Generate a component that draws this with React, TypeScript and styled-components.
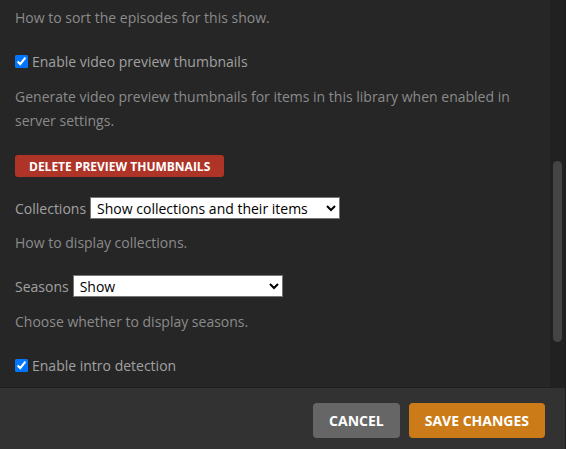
import React from "react";
import styled, { createGlobalStyle } from "styled-components";

const GlobalStyle = createGlobalStyle`
  html, body {
    margin: 0;
    padding: 0;
    background: #1d1d1d;
  }
  body {
    font-family: "Open Sans", "Liberation Sans", sans-serif;
  }
`;

const Modal = styled.div`
  width: 565px;
  height: 449px;
  display: flex;
  flex-direction: column;
  overflow: hidden;
`;

const Body = styled.div`
  flex: 1;
  display: flex;
  min-height: 0;
  background-color: #262626;
`;

const ScrollContent = styled.div`
  flex: 1;
  padding: 6px 15px 0;
  overflow: hidden;
`;

const Track = styled.div`
  width: 15px;
  background-color: #212121;
  display: flex;
  justify-content: center;
`;

const Thumb = styled.div`
  width: 9px;
  height: 181px;
  margin-top: 161px;
  border-radius: 5px;
  background-color: #444;
`;

const Group = styled.div`
  margin-bottom: 20px;
`;

const Row = styled.div`
  display: flex;
  align-items: center;
  height: 22px;
  font-size: 14px;
  color: #a1a1a1;
`;

const Checkbox = styled.input.attrs({ type: "checkbox" })`
  width: 13px;
  height: 13px;
  margin: 0 4px 0 0;
`;

const Label = styled.label`
  margin-right: 4px;
`;

const Select = styled.select<{ $width: number }>`
  width: ${(p) => p.$width}px;
  height: 22px;
  font-family: "Open Sans", "Liberation Sans", sans-serif;
  font-size: 14px;
  color: #000;
  background-color: #fff;
  border: 1px solid #767676;
  border-radius: 0;
  padding: 0 2px;
`;

const Help = styled.p<{ $top?: number }>`
  margin: ${(p) => p.$top ?? 13}px 0 0;
  font-size: 14px;
  line-height: 24px;
  color: #8b8b8b;
`;

const DangerButton = styled.button`
  display: block;
  margin-top: 22px;
  height: 22px;
  padding: 0 14px;
  border: none;
  border-radius: 3px;
  background-color: #af3428;
  color: #fff;
  font-family: "Open Sans", "Liberation Sans", sans-serif;
  font-size: 12px;
  font-weight: 700;
  text-transform: uppercase;
  cursor: pointer;
`;

const Footer = styled.div`
  height: 62px;
  flex-shrink: 0;
  box-sizing: border-box;
  border-top: 1px solid #1f1f1f;
  background-color: #323232;
  display: flex;
  justify-content: flex-end;
  align-items: flex-start;
  gap: 9px;
  padding: 15px 20px 0;
`;

const FooterButton = styled.button<{ $primary?: boolean }>`
  height: 35px;
  padding: 0 16px;
  border: none;
  border-radius: 4px;
  background-color: ${(p) => (p.$primary ? "#cc7b19" : "#666")};
  color: #fff;
  font-family: "Open Sans", "Liberation Sans", sans-serif;
  font-size: 14px;
  font-weight: 700;
  text-transform: uppercase;
  cursor: pointer;
`;

const App: React.FC = () => {
  return (
    <>
      <GlobalStyle />
      <Modal>
        <Body>
          <ScrollContent>
            <Group>
              <Help $top={0}>How to sort the episodes for this show.</Help>
            </Group>
            <Group>
              <Row>
                <Checkbox defaultChecked id="thumbs" />
                <Label htmlFor="thumbs">Enable video preview thumbnails</Label>
              </Row>
              <Help>
                Generate video preview thumbnails for items in this library when enabled in
                server settings.
              </Help>
              <DangerButton>Delete preview thumbnails</DangerButton>
            </Group>
            <Group>
              <Row>
                <Label htmlFor="collections">Collections</Label>
                <Select id="collections" $width={250} defaultValue="show">
                  <option value="show">Show collections and their items</option>
                </Select>
              </Row>
              <Help $top={12}>How to display collections.</Help>
            </Group>
            <Group>
              <Row>
                <Label htmlFor="seasons">Seasons</Label>
                <Select id="seasons" $width={210} defaultValue="show">
                  <option value="show">Show</option>
                </Select>
              </Row>
              <Help>Choose whether to display seasons.</Help>
            </Group>
            <Group>
              <Row>
                <Checkbox defaultChecked id="intro" />
                <Label htmlFor="intro">Enable intro detection</Label>
              </Row>
            </Group>
          </ScrollContent>
          <Track>
            <Thumb />
          </Track>
        </Body>
        <Footer>
          <FooterButton>Cancel</FooterButton>
          <FooterButton $primary>Save changes</FooterButton>
        </Footer>
      </Modal>
    </>
  );
};

export default App;
